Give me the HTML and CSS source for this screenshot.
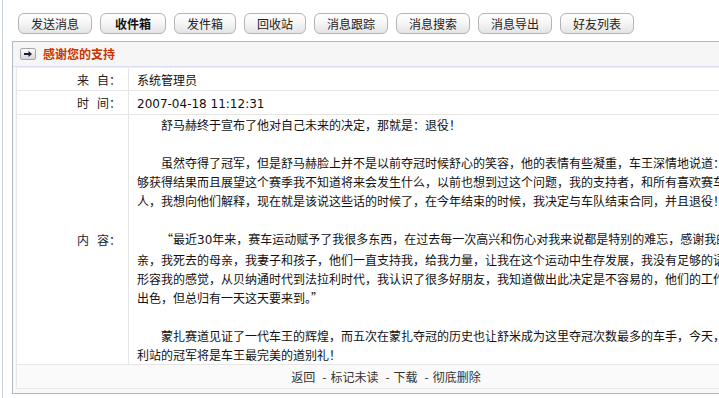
FILE: index.html
```html
<!DOCTYPE html>
<html lang="zh-CN">
<head>
<meta charset="utf-8">
<title>收件箱</title>
<link rel="stylesheet" href="styles.css">
</head>
<body>
<div class="frame">
  <div class="toolbar">
    <button class="btn">发送消息</button>
    <button class="btn btn-active">收件箱</button>
    <button class="btn">发件箱</button>
    <button class="btn">回收站</button>
    <button class="btn">消息跟踪</button>
    <button class="btn">消息搜索</button>
    <button class="btn">消息导出</button>
    <button class="btn">好友列表</button>
  </div>
  <div class="box">
    <div class="box-head">
      <svg class="head-icon" width="16" height="12" viewBox="0 0 16 12">
        <defs>
          <linearGradient id="ig" x1="0" y1="0" x2="0" y2="1">
            <stop offset="0" stop-color="#ffffff"/>
            <stop offset="1" stop-color="#d4d4d4"/>
          </linearGradient>
        </defs>
        <rect x="0.5" y="0.5" width="15" height="11" rx="1.5" fill="url(#ig)" stroke="#a8a8a8"/>
        <path d="M4 5h4.5V3l3.5 3-3.5 3V7H4z" fill="#1d1d3a"/>
      </svg>
      <span class="head-title">感谢您的支持</span>
    </div>
    <div class="box-body">
      <table class="msg">
        <tr class="row-a">
          <td class="lbl">来<span class="gap"></span>自：</td>
          <td class="val">系统管理员</td>
        </tr>
        <tr class="row-b">
          <td class="lbl">时<span class="gap"></span>间：</td>
          <td class="val"><span class="num">2007-04-18 11:12:31</span></td>
        </tr>
        <tr>
          <td class="lbl">内<span class="gap"></span>容：</td>
          <td class="content">
            <div class="text">
              <p>舒马赫终于宣布了他对自己未来的决定，那就是：退役！</p>
              <p>虽然夺得了冠军，但是舒马赫脸上并不是以前夺冠时候舒心的笑容，他的表情有些凝重，车王深情地说道：能够获得结果而且展望这个赛季我不知道将来会发生什么，以前也想到过这个问题，我的支持者，和所有喜欢赛车的人，我想向他们解释，现在就是该说这些话的时候了，在今年结束的时候，我决定与车队结束合同，并且退役！</p>
              <p>“最近<span class="num">30</span>年来，赛车运动赋予了我很多东西，在过去每一次高兴和伤心对我来说都是特别的难忘，感谢我的父亲，我死去的母亲，我妻子和孩子，他们一直支持我，给我力量，让我在这个运动中生存发展，我没有足够的语言形容我的感觉，从贝纳通时代到法拉利时代，我认识了很多好朋友，我知道做出此决定是不容易的，他们的工作很出色，但总归有一天这天要来到。”</p>
              <p>蒙扎赛道见证了一代车王的辉煌，而五次在蒙扎夺冠的历史也让舒米成为这里夺冠次数最多的车手，今天，胜利站的冠军将是车王最完美的道别礼！</p>
            </div>
          </td>
        </tr>
        <tr>
          <td class="foot" colspan="2"><a href="#">返回</a><span class="sep">-</span><a href="#">标记未读</a><span class="sep">-</span><a href="#">下载</a><span class="sep">-</span><a href="#">彻底删除</a></td>
        </tr>
      </table>
    </div>
  </div>
</div>
</body>
</html>
```

FILE: styles.css
```css
html, body {
  margin: 0;
  padding: 0;
  background: #ffffff;
}
body {
  font-family: "Noto Sans CJK SC", sans-serif;
  font-size: 12px;
  color: #111;
}
.num {
  font-family: "DejaVu Sans", sans-serif;
}
.frame {
  margin-left: 2px;
  border-left: 1px solid #c6d0d8;
  padding-left: 9px;
  min-height: 398px;
  box-sizing: border-box;
  overflow: hidden;
}
.toolbar {
  display: flex;
  gap: 8px;
  padding: 13px 0 0 6px;
  height: 21px;
  margin-bottom: 7px;
}
.btn {
  font-family: "Noto Sans CJK SC", sans-serif;
  font-size: 12px;
  color: #222;
  height: 21px;
  line-height: 19px;
  padding: 0 12px;
  margin: 0;
  border: 1px solid #b4b4b4;
  border-radius: 6px;
  background: linear-gradient(#ffffff 0%, #f6f6f6 45%, #e4e4e4 100%);
  cursor: pointer;
}
.btn-active {
  font-weight: bold;
  padding: 0 14px;
  color: #111;
}
.box {
  width: 748px;
  border: 1px solid #aebbc5;
  background: #f8f8f8;
}
.box-head {
  display: flex;
  align-items: center;
  height: 24px;
  padding-left: 7px;
  gap: 7px;
  background: #f6f6f6;
  border-bottom: 1px solid #dcdcf4;
}
.head-icon {
  display: block;
  flex: none;
}
.head-title {
  color: #cc3300;
  font-weight: bold;
  line-height: 24px;
}
.box-body {
  padding: 0 4px 4px 3px;
}
.msg {
  border-collapse: separate;
  border-spacing: 0;
  border-top: 1px solid #f3f1e4;
  border-left: 1px solid #e8e8e8;
  background: #ffffff;
  width: 740px;
}
.msg td {
  padding: 0;
  border-right: 1px solid #e6e6e6;
  border-bottom: 1px solid #e6e6e6;
  vertical-align: middle;
}
.row-a td { height: 22px; }
.row-b td { height: 23px; }
.lbl {
  width: 104px;
  padding-right: 7px !important;
  text-align: right;
  white-space: nowrap;
  color: #222;
}
.gap {
  display: inline-block;
  width: 8px;
}
.val {
  padding-left: 8px !important;
  color: #111;
}
.content {
  padding: 0 12px 0 8px !important;
}
.text {
  width: 606px;
  line-height: 19px;
  color: #111;
}
.text p {
  margin: 0 0 19px 0;
  text-indent: 24px;
}
.text p:last-child {
  margin-bottom: 0;
}
.foot {
  height: 23px;
  text-align: center;
  background: #fafafa;
  color: #333;
}
.foot a {
  color: #333;
  text-decoration: none;
}
.sep {
  margin: 0 4px 0 7px;
  color: #333;
}
```
